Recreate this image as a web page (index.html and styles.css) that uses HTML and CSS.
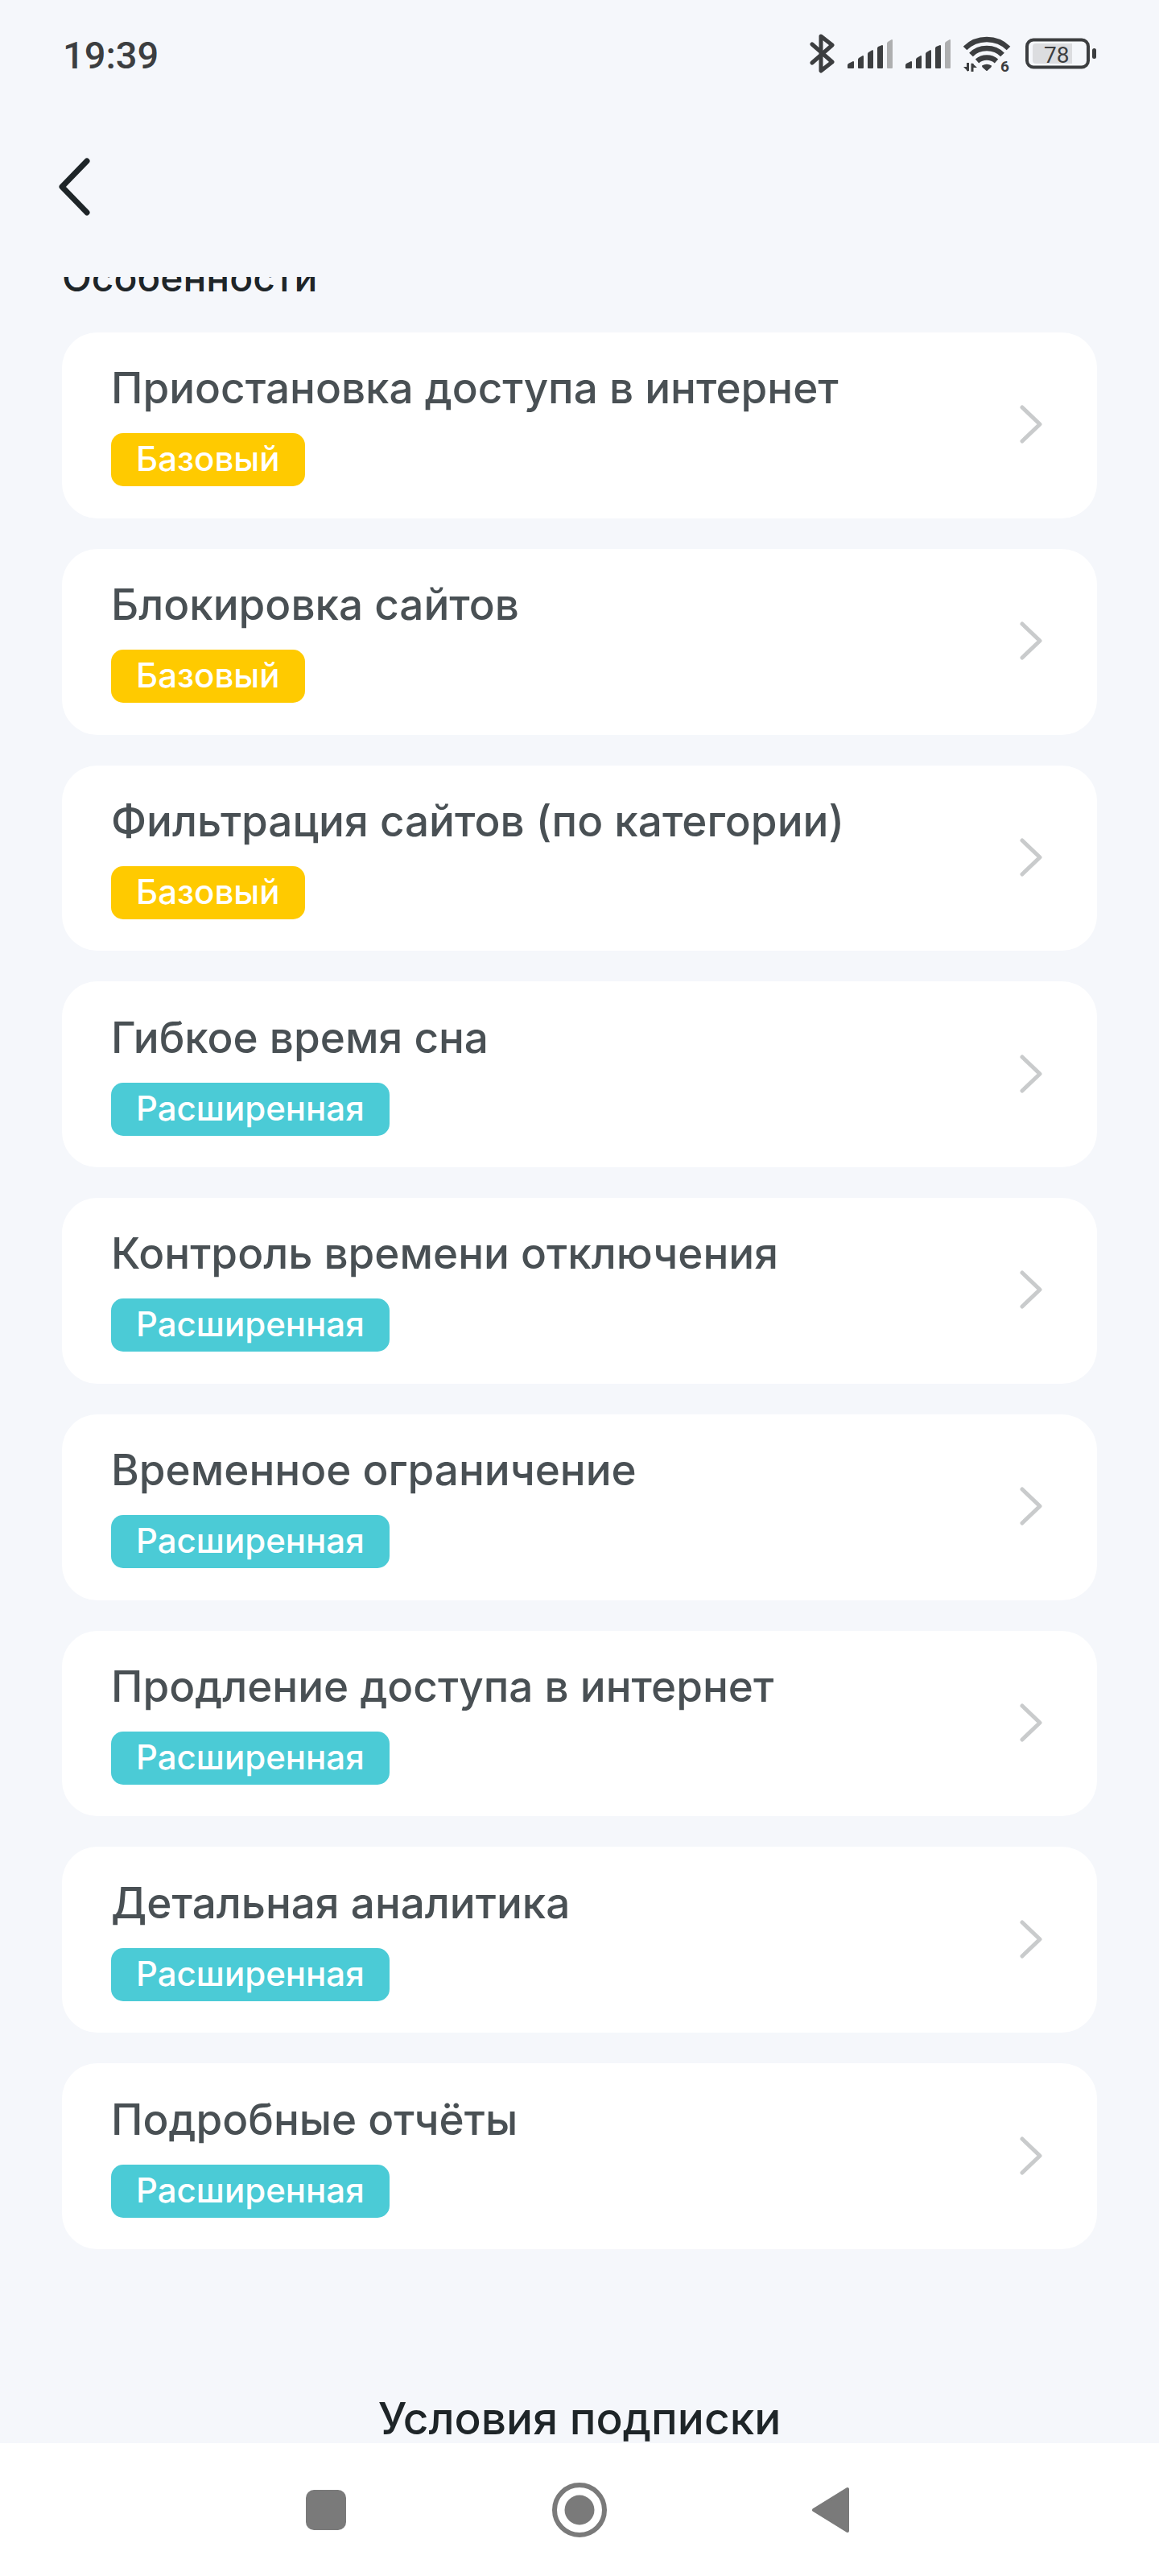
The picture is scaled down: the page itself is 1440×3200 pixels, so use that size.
FILE: index.html
```html
<!DOCTYPE html>
<html lang="ru">
<head>
  <meta charset="UTF-8">
  <meta name="viewport" content="width=device-width, initial-scale=1.0">
  <title>Условия подписки</title>
  <link rel="stylesheet" href="styles.css">
</head>
<body>
  <div class="status-bar">
    <span class="time">19:39</span>
    <div class="status-icons">
      <!-- Bluetooth -->
      <svg width="33" height="50" viewBox="0 0 33 50" fill="none" stroke="#3c3e40" stroke-width="5" stroke-linecap="round" stroke-linejoin="round">
        <path d="M3 14 L28 36 L14 47 V4 L28 15 L3 37"/>
      </svg>
      <!-- SIM 1 -->
      <svg width="58" height="50" viewBox="0 0 58 50" fill="#3c3e40">
        <path d="M0 43 V40 Q0 39 1 38 L7 35 Q8 35 8 36 V43 Q8 44 7 44 H1 Q0 44 0 43Z"/>
        <path d="M13 43 V33 Q13 32 14 31 L19 28 Q20 28 20 29 V43 Q20 44 19 44 H14 Q13 44 13 43Z"/>
        <path d="M25 43 V26 Q25 25 26 24 L31 21 Q32 21 32 23 V43 Q32 44 31 44 H26 Q25 44 25 43Z"/>
        <path d="M37 43 V19 Q37 18 38 17 L43 15 Q44 15 44 16 V43 Q44 44 43 44 H38 Q37 44 37 43Z"/>
        <path fill="#aeafb0" d="M49 43 V13 Q49 12 50 11 L55 8 Q56 8 56 9 V43 Q56 44 55 44 H50 Q49 44 49 43Z"/>
      </svg>
      <!-- SIM 2 -->
      <svg width="58" height="50" viewBox="0 0 58 50" fill="#3c3e40">
        <path d="M0 43 V40 Q0 39 1 38 L7 35 Q8 35 8 36 V43 Q8 44 7 44 H1 Q0 44 0 43Z"/>
        <path d="M13 43 V33 Q13 32 14 31 L19 28 Q20 28 20 29 V43 Q20 44 19 44 H14 Q13 44 13 43Z"/>
        <path d="M25 43 V26 Q25 25 26 24 L31 21 Q32 21 32 23 V43 Q32 44 31 44 H26 Q25 44 25 43Z"/>
        <path d="M37 43 V19 Q37 18 38 17 L43 15 Q44 15 44 16 V43 Q44 44 43 44 H38 Q37 44 37 43Z"/>
        <path fill="#aeafb0" d="M49 43 V13 Q49 12 50 11 L55 8 Q56 8 56 9 V43 Q56 44 55 44 H50 Q49 44 49 43Z"/>
      </svg>
      <!-- Wi-Fi -->
      <svg width="61" height="50" viewBox="0 0 61 50" fill="none" stroke="#3c3e40" stroke-width="6.500">
        <path d="M2 19 Q13 8 29 8 Q45 8 56 19"/>
        <path d="M9.500 27 Q17 19 29 19 Q41 19 48.500 27"/>
        <path d="M17 35 Q22 30.500 29 30.500 Q36 30.500 41 35"/>
        <path fill="#3c3e40" stroke="none" d="M23 40.500 Q29 37 35 40.500 Q35 42 34 43 L30 46.500 Q29 47.500 28 46.500 L24 43 Q23 42 23 40.500Z"/>
        <path stroke-width="3" d="M5.500 37 V47 M11 48 V38"/>
        <path fill="#3c3e40" stroke="none" d="M0 42 H6 V48Z M10.500 37 L17 43 H10.500Z"/>
        <text class="wifi-gen" x="46" y="48">6</text>
      </svg>
      <!-- Battery -->
      <svg width="90" height="50" viewBox="0 0 90 50">
        <rect x="4" y="8.500" width="76" height="34" rx="8" fill="none" stroke="#3c3e40" stroke-width="4"/>
        <path fill="#dcdde0" d="M15 13 H60 V38 H15 Q11 38 11 34 V17 Q11 13 15 13Z"/>
        <rect x="85" y="19" width="5" height="13" rx="2.500" fill="#3c3e40"/>
        <text class="battery-level" x="25" y="37">78</text>
      </svg>
    </div>
  </div>

  <header class="header">
    <button class="back" type="button" aria-label="Назад">
      <svg width="40" height="72" viewBox="0 0 40 72" fill="none" stroke="#1e2528" stroke-width="7" stroke-linecap="round" stroke-linejoin="round">
        <path d="M36 4 L5 36 L36 68"/>
      </svg>
    </button>
  </header>

  <main class="content">
    <h2 class="section-title">Особенности</h2>
    <!-- Список функций, строится скриптом -->
    <ul class="features" id="features"></ul>
    <h2 class="terms-title">Условия подписки</h2>
  </main>

  <nav class="nav-bar">
    <button type="button" aria-label="Недавние">
      <svg width="70" height="70" viewBox="0 0 70 70" fill="#7a7a7a"><rect x="10" y="10" width="50" height="50" rx="10"/></svg>
    </button>
    <button type="button" aria-label="Домой">
      <svg width="70" height="70" viewBox="0 0 70 70" fill="#7a7a7a"><circle cx="35" cy="35" r="31" fill="none" stroke="#7a7a7a" stroke-width="6"/><circle cx="35" cy="35" r="18.500"/></svg>
    </button>
    <button type="button" aria-label="Назад">
      <svg width="70" height="70" viewBox="0 0 70 70" fill="#7a7a7a" stroke="#7a7a7a" stroke-width="4" stroke-linejoin="round"><path d="M11 35 L53 9 V61Z"/></svg>
    </button>
  </nav>

  <script>
    const features = [
      { name: 'Приостановка доступа в интернет', plan: 'basic' },
      { name: 'Блокировка сайтов', plan: 'basic' },
      { name: 'Фильтрация сайтов (по категории)', plan: 'basic' },
      { name: 'Гибкое время сна', plan: 'advanced' },
      { name: 'Контроль времени отключения', plan: 'advanced' },
      { name: 'Временное ограничение', plan: 'advanced' },
      { name: 'Продление доступа в интернет', plan: 'advanced' },
      { name: 'Детальная аналитика', plan: 'advanced' },
      { name: 'Подробные отчёты', plan: 'advanced' }
    ];

    const planNames = { basic: 'Базовый', advanced: 'Расширенная' };

    document.getElementById('features').innerHTML = features.map(item => `
      <li>
        <a class="card" href="#">
          <span class="card-text">
            <span class="card-title">${item.name}</span>
            <span class="badge ${item.plan}">${planNames[item.plan]}</span>
          </span>
          <svg class="chevron" width="30" height="50" viewBox="0 0 30 50">
            <path d="M4 4 L26 25 L4 46"/>
          </svg>
        </a>
      </li>
    `).join('');
  </script>
</body>
</html>
```
FILE: styles.css
```css
* {
  box-sizing: border-box;
}

body {
  margin: 0;
  min-height: 100vh;
  display: flex;
  flex-direction: column;
  background: #f5f7fb;
  color: #1e2528;
  font-family: Inter, "Noto Sans", sans-serif;
}

button {
  padding: 0;
  border: none;
  background: none;
  cursor: pointer;
}

svg {
  display: block;
}

.status-bar {
  display: flex;
  justify-content: space-between;
  align-items: center;
  height: 132px;
  padding: 0 78px;
  color: #3c3e40;
  font-family: Roboto, sans-serif;
}

.time {
  padding-top: 4px;
  font-size: 47px;
  font-weight: 500;
}

.status-icons {
  display: flex;
  gap: 14px;
}

.wifi-gen {
  font: bold 19px Roboto, sans-serif;
  fill: #3c3e40;
  stroke: none;
}

.battery-level {
  font: 28px Roboto, sans-serif;
  fill: #3c3e40;
}

.header {
  display: flex;
  align-items: center;
  height: 212px;
  padding: 0 72px 12px;
}

.content {
  flex: 1;
  display: flex;
  flex-direction: column;
  padding: 0 77px;
  overflow: hidden;
}

/* список прокручен, заголовок наполовину скрыт */
.section-title {
  margin: -31px 0 36px;
  font-size: 48px;
  line-height: 64px;
  font-weight: 500;
}

.features {
  flex: 1;
  display: grid;
  grid-auto-rows: 1fr;
  gap: 38px;
  margin: 0;
  padding: 0;
  list-style: none;
}

.card {
  display: flex;
  justify-content: space-between;
  align-items: center;
  height: 100%;
  padding: 37px 67px 39px 61px;
  border-radius: 44px;
  background: #fff;
  color: #495054;
  text-decoration: none;
}

.card-text {
  display: flex;
  flex-direction: column;
  align-items: flex-start;
  gap: 24px;
}

.card-title {
  font-size: 53px;
  line-height: 64px;
  font-weight: 500;
}

.badge {
  padding: 0 31px 2px;
  border-radius: 15px;
  color: #fff;
  font-size: 42px;
  line-height: 64px;
  font-weight: 500;
}

.basic {
  background: #ffca00;
}

.advanced {
  background: #4bcbd6;
}

.chevron {
  fill: none;
  stroke: #c9cbcc;
  stroke-width: 5;
  stroke-linecap: round;
  stroke-linejoin: round;
}

.terms-title {
  margin: 180px 0 0;
  font-size: 55px;
  line-height: 61px;
  font-weight: 500;
  text-align: center;
}

.nav-bar {
  display: flex;
  justify-content: center;
  align-items: center;
  gap: 245px;
  height: 165px;
  background: #fff;
}
```
